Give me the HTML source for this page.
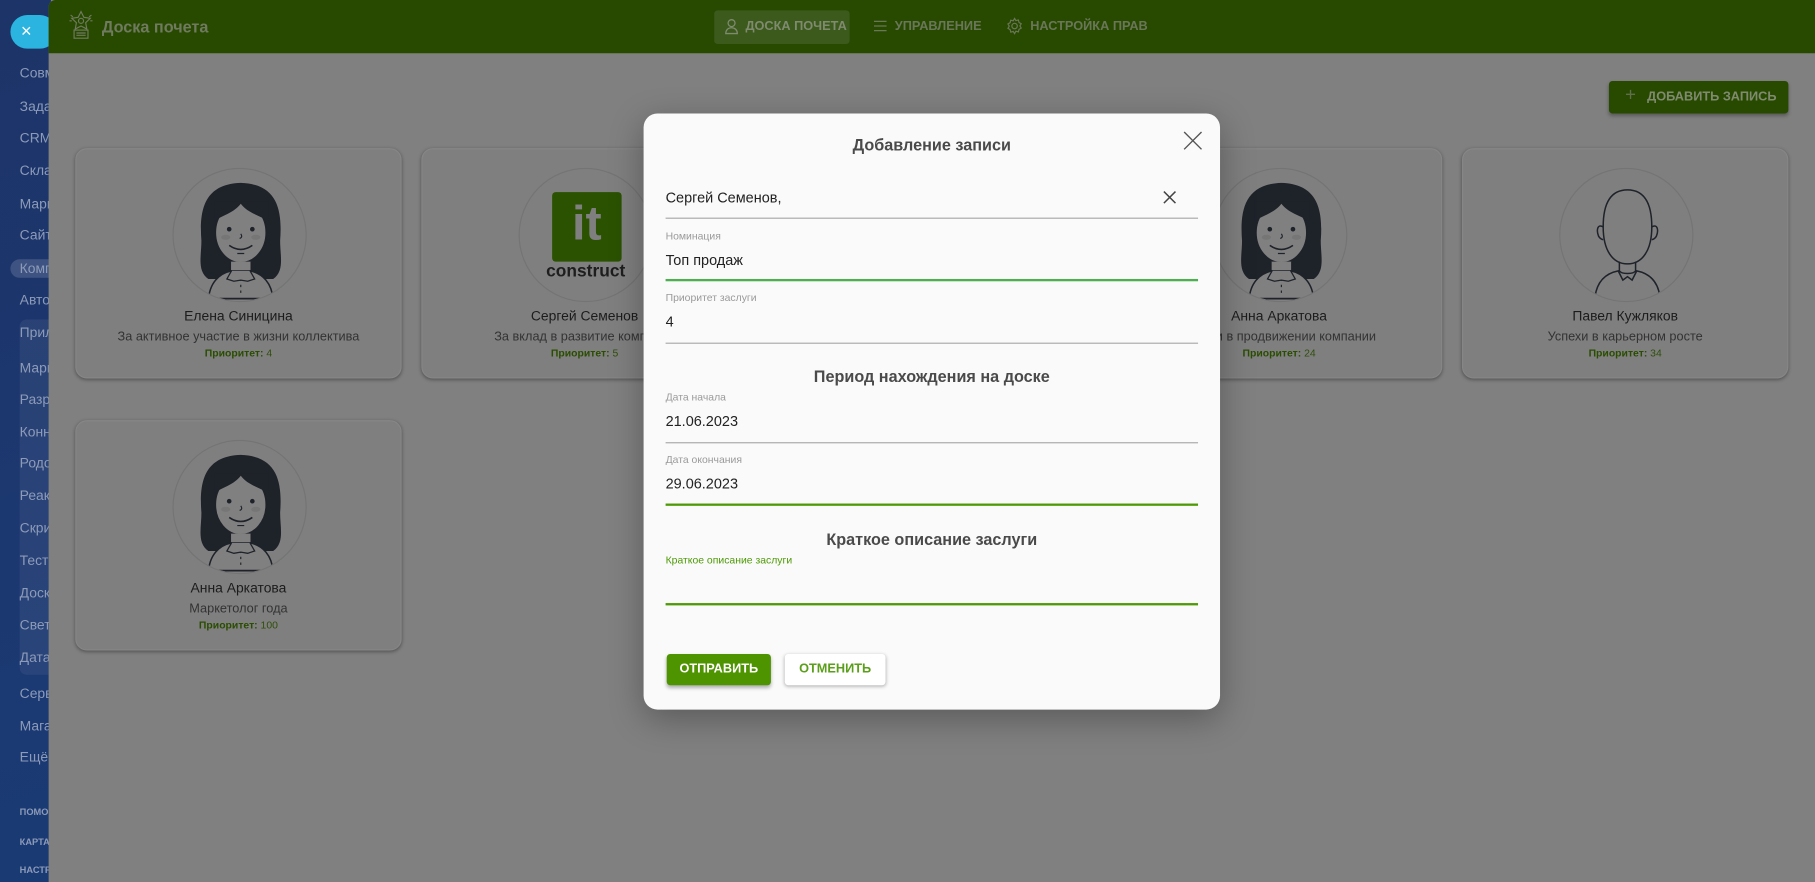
<!DOCTYPE html>
<html><head><meta charset="utf-8">
<style>
*{margin:0;padding:0;box-sizing:border-box}
html,body{width:1815px;height:882px;overflow:hidden;background:#808080}
#w{position:absolute;left:0;top:0;width:1568px;height:762px;transform:scale(1.15753);transform-origin:0 0;font-family:"Liberation Sans","DejaVu Sans",sans-serif;background:#808080}
.side{position:absolute;left:0;top:0;width:44px;height:762px;background:linear-gradient(160deg,#1d3468 0%,#1c3870 60%,#1a3a74 100%);overflow:hidden}
.side div{position:absolute;left:17px;font-size:12px;color:#8d9bb8;white-space:nowrap}
.side .sm{font-size:8px;font-weight:bold}
.grp{position:absolute;left:3px;top:276px;width:60px;height:307px;background:rgba(255,255,255,.06);border-radius:6px}
.xbtn{position:absolute;left:9px;top:13px;width:40px;height:29px;background:#2bb4e0;border-radius:15px;color:#fff;font-size:16px;line-height:29px;padding-left:9px}
.main{position:absolute;left:42px;top:0;right:0;bottom:0;background:#808080;border-radius:6px 0 0 0}
.hdr{position:absolute;left:42px;top:0;right:0;height:46px;background:#284a00;border-radius:6px 0 0 0}
.t{position:absolute;white-space:nowrap}
.card{position:absolute;width:282px;height:199px;background:#7f7f7f;border-radius:10px;box-shadow:0 1px 3px rgba(0,0,0,.35);border:1px solid #868686}
.card .circ{position:absolute;left:83px;top:16px;width:116px;height:116px;border-radius:50%;border:1px solid #747474;overflow:hidden}
.card .nm{position:absolute;left:0;right:0;top:137px;text-align:center;font-size:12px;color:#1c1c1c}
.card .ds{position:absolute;left:0;right:0;top:156px;text-align:center;font-size:11px;color:#333}
.card .pr{position:absolute;left:0;right:0;top:171px;text-align:center;font-size:9px;color:#2f4f0a}
.card .pr b{color:#2a4d00}
.dlg{position:absolute;left:556px;top:98px;width:498px;height:515px;background:#fafafa;border-radius:12px;box-shadow:0 8px 30px rgba(0,0,0,.3)}
.dlg .lbl{position:absolute;left:19px;font-size:9px;color:#9a9a9a}
.dlg .val{position:absolute;left:19px;font-size:12.5px;color:#222}
.dlg .ln{position:absolute;left:19px;width:460px;height:1px;background:#a8a8a8}
.dlg .g{height:2px;background:#4caf50}
.dlg .g2{height:2px;background:#4e9a06}
.dlg .h{position:absolute;left:0;right:0;text-align:center;font-size:14px;font-weight:bold;color:#4a4a4a}
</style></head><body><div id="w">
<div class="side">
<div class="grp"></div>
<div style="top:56px">Совместная</div><div style="top:85px">Задачи</div><div style="top:112px">CRM</div><div style="top:140px">Склад</div><div style="top:169px">Маркетинг</div><div style="top:196px">Сайты</div>
<div style="top:224px;left:9px;background:rgba(255,255,255,.15);border-radius:9px;padding:0 8px;height:16px;line-height:16px">Компания</div>
<div style="top:252px">Автоматизация</div><div style="top:280px">Приложения</div><div style="top:311px">Маркет</div><div style="top:338px">Разработка</div><div style="top:366px">Коннекторы</div><div style="top:393px">Родословная</div><div style="top:421px">Реакции</div><div style="top:449px">Скрипты</div><div style="top:477px">Тесты</div><div style="top:505px">Доска</div><div style="top:533px">Светофор</div><div style="top:561px">Дата</div><div style="top:592px">Сервисы</div><div style="top:620px">Магазин</div><div style="top:647px">Ещё</div>
<div class="sm" style="top:697px">ПОМОЩЬ</div><div class="sm" style="top:723px">КАРТА</div><div class="sm" style="top:747px">НАСТРОЙКИ</div>
</div>
<div class="xbtn">×</div>
<div class="main"></div>
<div class="hdr">
<svg style="position:absolute;left:18px;top:9px" width="20" height="26" viewBox="0 0 20 26" fill="none" stroke="#6f7a5f" stroke-width="1"><path d="M10 1l2.5 5 5.5.8-4 3.8 1 5.5-5-2.6-5 2.6 1-5.5-4-3.8 5.5-.8z"/><circle cx="10" cy="9" r="2.2"/><rect x="4" y="17" width="12" height="7"/><path d="M6 19.5h8M6 21.5h8"/><path d="M1 4l2 1.5M19 4l-2 1.5M0 9h2M18 9h2"/></svg>
<div class="t" style="left:46px;top:15px;font-size:14px;font-weight:bold;color:#6f7a5f">Доска почета</div>
<div style="position:absolute;left:575px;top:9px;width:117px;height:29px;background:#3b5a1c;border-radius:3px"></div>
<svg style="position:absolute;left:584px;top:16px" width="12" height="14" viewBox="0 0 12 14" fill="none" stroke="#7f8a6f" stroke-width="1.1"><circle cx="6" cy="4" r="3"/><path d="M1 13c0-3 2-5 5-5s5 2 5 5z"/></svg>
<div class="t" style="left:602px;top:17px;font-size:11px;font-weight:bold;color:#7f8a6f">ДОСКА ПОЧЕТА</div>
<svg style="position:absolute;left:713px;top:17px" width="11" height="11" viewBox="0 0 11 11" stroke="#6a7658" stroke-width="1.1"><path d="M0 1.5h11M0 5.5h11M0 9.5h11"/></svg>
<div class="t" style="left:731px;top:17px;font-size:11px;font-weight:bold;color:#6a7658">УПРАВЛЕНИЕ</div>
<svg style="position:absolute;left:827px;top:15px" width="15" height="15" viewBox="0 0 16 16" fill="none" stroke="#6a7658" stroke-width="1.1"><circle cx="8" cy="8" r="2.5"/><path d="M8 1l1.2 2 2.3-.6.6 2.3 2 1.2-1.2 2 1.2 2-2 1.2-.6 2.3-2.3-.6L8 15l-1.2-2-2.3.6-.6-2.3-2-1.2 1.2-2-1.2-2 2-1.2.6-2.3 2.3.6z"/></svg>
<div class="t" style="left:848px;top:17px;font-size:11px;font-weight:bold;color:#6a7658">НАСТРОЙКА ПРАВ</div>
</div>
<div style="position:absolute;left:1390px;top:70px;width:155px;height:28px;background:#284a00;border-radius:3px;box-shadow:0 2px 3px rgba(0,0,0,.3)"></div>
<div class="t" style="left:1404px;top:74px;font-size:16px;color:#5f6f4a">+</div>
<div class="t" style="left:1423px;top:78px;font-size:11px;font-weight:bold;color:#7f8a6f">ДОБАВИТЬ ЗАПИСЬ</div>

<svg width="0" height="0" style="position:absolute">
<defs>
<g id="girl">
<path d="M30 95 C20 88 24 75 24 62 C22 36 26 13 58 12 C90 13 94 36 92 62 C92 75 96 88 86 95 Z" fill="#1e2229"/>
<ellipse cx="58" cy="55" rx="22" ry="26" fill="#808080" stroke="#1e2229" stroke-width="1.4"/>
<path d="M35 45 C42 40 52 38 58 30 C64 38 74 40 82 45 L82 28 L35 28Z" fill="#1e2229"/>
<circle cx="48" cy="52" r="2" fill="#1e2229"/><circle cx="68" cy="52" r="2" fill="#1e2229"/>
<ellipse cx="45" cy="59" rx="4" ry="2.2" fill="#767676"/><ellipse cx="71" cy="59" rx="4" ry="2.2" fill="#767676"/>
<path d="M58 56 q2 3 -1 4" stroke="#1e2229" fill="none" stroke-width="1"/>
<path d="M48 66 q10 7 20 0" stroke="#1e2229" fill="none" stroke-width="1.4"/>
<path d="M55 73h6" stroke="#1e2229"/>
<path d="M49 80v8h18v-8" fill="#808080" stroke="#1e2229" stroke-width="1.2"/>
<path d="M30 116 C30 98 40 90 50 88 L58 96 L66 88 C76 90 86 98 86 116Z" fill="#808080" stroke="#1e2229" stroke-width="1.3"/>
<path d="M50 88 l-4 7 6 2 6-1 6 1 6-2-4-7" fill="#808080" stroke="#1e2229" stroke-width="1.1"/>
<path d="M58 100v2M58 105v2" stroke="#1e2229"/>
<path d="M35 112h46" stroke="#1e2229" stroke-width="1.5"/>
</g>
<g id="man" fill="none" stroke="#1e2229" stroke-width="1.3">
<path d="M58 18 C42 18 37 32 37 50 C37 70 45 82 58 82 C71 82 79 70 79 50 C79 32 74 18 58 18Z"/>
<path d="M37 50c-5-3-6 3-4 8 1 2 3 3 4 3M79 50c5-3 6 3 4 8-1 2-3 3-4 3"/>
<path d="M51 80v8c2 3 12 3 14 0v-8"/>
<path d="M30 110 C32 96 40 90 50 88 L54 96 L58 93 L62 96 L66 88 C76 90 84 96 86 110"/>
<path d="M40 115h36" stroke-width="1.6"/>
</g>
</defs></svg>

<div class="card" style="left:65px;top:128px"><div class="circ"><svg width="116" height="116"><use href="#girl"/></svg></div><div class="nm">Елена Синицина</div><div class="ds">За активное участие в жизни коллектива</div><div class="pr"><b>Приоритет:</b> 4</div></div>
<div class="card" style="left:364px;top:128px"><div class="circ"><div style="position:absolute;left:28px;top:20px;width:60px;height:60px;background:#2a5200;border-radius:3px;color:#7f7f7f;font-size:42px;font-weight:bold;text-align:center;line-height:54px">it</div><div style="position:absolute;left:0;right:0;top:80px;text-align:center;font-size:15px;font-weight:bold;color:#1e1e1e">construct</div></div><div class="nm">Сергей Семенов</div><div class="ds">За вклад в развитие компании</div><div class="pr"><b>Приоритет:</b> 5</div></div>
<div class="card" style="left:964px;top:128px"><div class="circ"><svg width="116" height="116"><use href="#girl"/></svg></div><div class="nm">Анна Аркатова</div><div class="ds">Успехи в продвижении компании</div><div class="pr"><b>Приоритет:</b> 24</div></div>
<div class="card" style="left:1263px;top:128px"><div class="circ"><svg width="116" height="116"><use href="#man"/></svg></div><div class="nm">Павел Кужляков</div><div class="ds">Успехи в карьерном росте</div><div class="pr"><b>Приоритет:</b> 34</div></div>
<div class="card" style="left:65px;top:363px"><div class="circ"><svg width="116" height="116"><use href="#girl"/></svg></div><div class="nm">Анна Аркатова</div><div class="ds">Маркетолог года</div><div class="pr"><b>Приоритет:</b> 100</div></div>

<div class="dlg">
<div class="h" style="top:19px">Добавление записи</div>
<svg style="position:absolute;left:466px;top:15px" width="17" height="17" viewBox="0 0 17 17" stroke="#555" stroke-width="1.2"><path d="M1 1l15 15M16 1L1 16"/></svg>
<div class="val" style="top:66px">Сергей Семенов,</div>
<svg style="position:absolute;left:449px;top:67px" width="11" height="11" viewBox="0 0 11 11" stroke="#444" stroke-width="1.3"><path d="M.5.5l10 10M10.5.5l-10 10"/></svg>
<div class="ln" style="top:90px"></div>
<div class="lbl" style="top:101px">Номинация</div>
<div class="val" style="top:120px">Топ продаж</div>
<div class="ln g" style="top:143px"></div>
<div class="lbl" style="top:154px">Приоритет заслуги</div>
<div class="val" style="top:173px">4</div>
<div class="ln" style="top:198px"></div>
<div class="h" style="top:219px">Период нахождения на доске</div>
<div class="lbl" style="top:240px">Дата начала</div>
<div class="val" style="top:259px">21.06.2023</div>
<div class="ln" style="top:284px"></div>
<div class="lbl" style="top:294px">Дата окончания</div>
<div class="val" style="top:313px">29.06.2023</div>
<div class="ln g2" style="top:337px"></div>
<div class="h" style="top:360px">Краткое описание заслуги</div>
<div class="lbl" style="top:381px;color:#4e9a06">Краткое описание заслуги</div>
<div class="ln g2" style="top:423px"></div>
<div style="position:absolute;left:20px;top:467px;width:90px;height:27px;background:#4e9300;border-radius:3px;box-shadow:0 2px 3px rgba(0,0,0,.3);color:#fff;font-size:11px;font-weight:bold;text-align:center;line-height:27px">ОТПРАВИТЬ</div>
<div style="position:absolute;left:122px;top:467px;width:87px;height:27px;background:#fff;border-radius:3px;box-shadow:0 1px 3px rgba(0,0,0,.3);color:#5a9e1a;font-size:11px;font-weight:bold;text-align:center;line-height:27px">ОТМЕНИТЬ</div>
</div>
</div></body></html>
